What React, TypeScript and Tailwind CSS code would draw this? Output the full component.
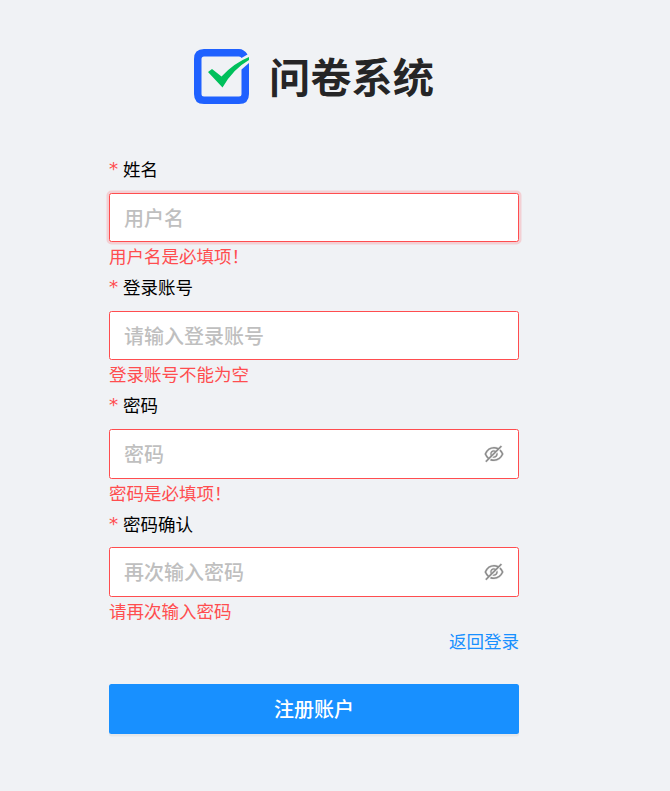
import { AiOutlineEyeInvisible } from "react-icons/ai";

type Field = {
  label: string;
  placeholder: string;
  error: string;
  box: string;
  gap: string;
  password?: boolean;
};

const fields: Field[] = [
  { label: "姓名", placeholder: "用户名", error: "用户名是必填项！", box: "h-[49px] shadow-[0_0_0_2.5px_rgba(255,77,79,0.2)]", gap: "mb-[9px]" },
  { label: "登录账号", placeholder: "请输入登录账号", error: "登录账号不能为空", box: "h-[49px]", gap: "mb-[9px]" },
  { label: "密码", placeholder: "密码", error: "密码是必填项！", box: "h-[50px]", gap: "mb-[9px]", password: true },
  { label: "密码确认", placeholder: "再次输入密码", error: "请再次输入密码", box: "h-[50px]", gap: "mb-[8px]", password: true },
];

function Logo() {
  return (
    <svg className="size-[55px]" viewBox="0 0 55 55">
      <path
        fill="#1f61ff"
        fillRule="evenodd"
        d="M10 0H45Q50 0 53.5 5.5L47.5 9Q47 7.5 45 7.5H10Q7.5 7.5 7.5 10V45Q7.5 47.5 10 47.5H45Q47.5 47.5 47.5 45V20.5L55 14V45Q55 55 45 55H10Q0 55 0 45V10Q0 0 10 0Z"
      />
      <path fill="#00c05b" d="M14 23L18 20L27.5 27.5Q40 14 55 8V11Q39 20 28.5 38.5Z" />
    </svg>
  );
}

export default function App() {
  return (
    <main className="flex h-[791px] w-[670px] flex-col bg-[#f0f2f5] font-['Noto_Sans_CJK_SC',sans-serif] text-[17.5px] leading-[30px] text-black/85">
      <header className="ml-[194px] mt-[49px] flex h-[55px] items-center gap-[20px]">
        <Logo />
        <h1 className="mb-[3px] text-[41.25px] font-bold leading-[55px]">问卷系统</h1>
      </header>
      <form className="ml-[109px] mt-[50px] flex w-[410px] flex-col">
        {fields.map((f) => (
          <div key={f.label} className="flex flex-col">
            <label className={`flex h-[30px] items-center text-black ${f.gap}`}>
              <span className="-ml-px mr-[5px] w-[10px] font-['DejaVu_Sans_Mono',monospace] text-[18.5px] text-[#ff4d4f]">*</span>
              {f.label}
            </label>
            <div className={`flex items-center rounded-[2.5px] border border-[#ff4d4f] bg-white px-[14px] ${f.box}`}>
              <input
                type={f.password ? "password" : "text"}
                placeholder={f.placeholder}
                className="min-w-0 flex-1 text-[20px] font-medium leading-[30px] outline-none placeholder:text-[#bfbfbf]"
              />
              {f.password && <AiOutlineEyeInvisible className="-mr-px size-[22px] stroke-[#8c8c8c] stroke-[10] text-[#8c8c8c]" />}
            </div>
            <p className="h-[30px] leading-[28px] text-[#ff4d4f]">{f.error}</p>
          </div>
        ))}
        <a className="h-[30px] self-end leading-[28px] text-[#1890ff]">返回登录</a>
        <button
          type="button"
          className="mt-[27px] h-[50px] rounded-[2.5px] bg-[#1890ff] text-[20px] font-medium text-white shadow-[0_2.5px_0_rgba(0,0,0,0.045)]"
        >
          注册账户
        </button>
      </form>
    </main>
  );
}
